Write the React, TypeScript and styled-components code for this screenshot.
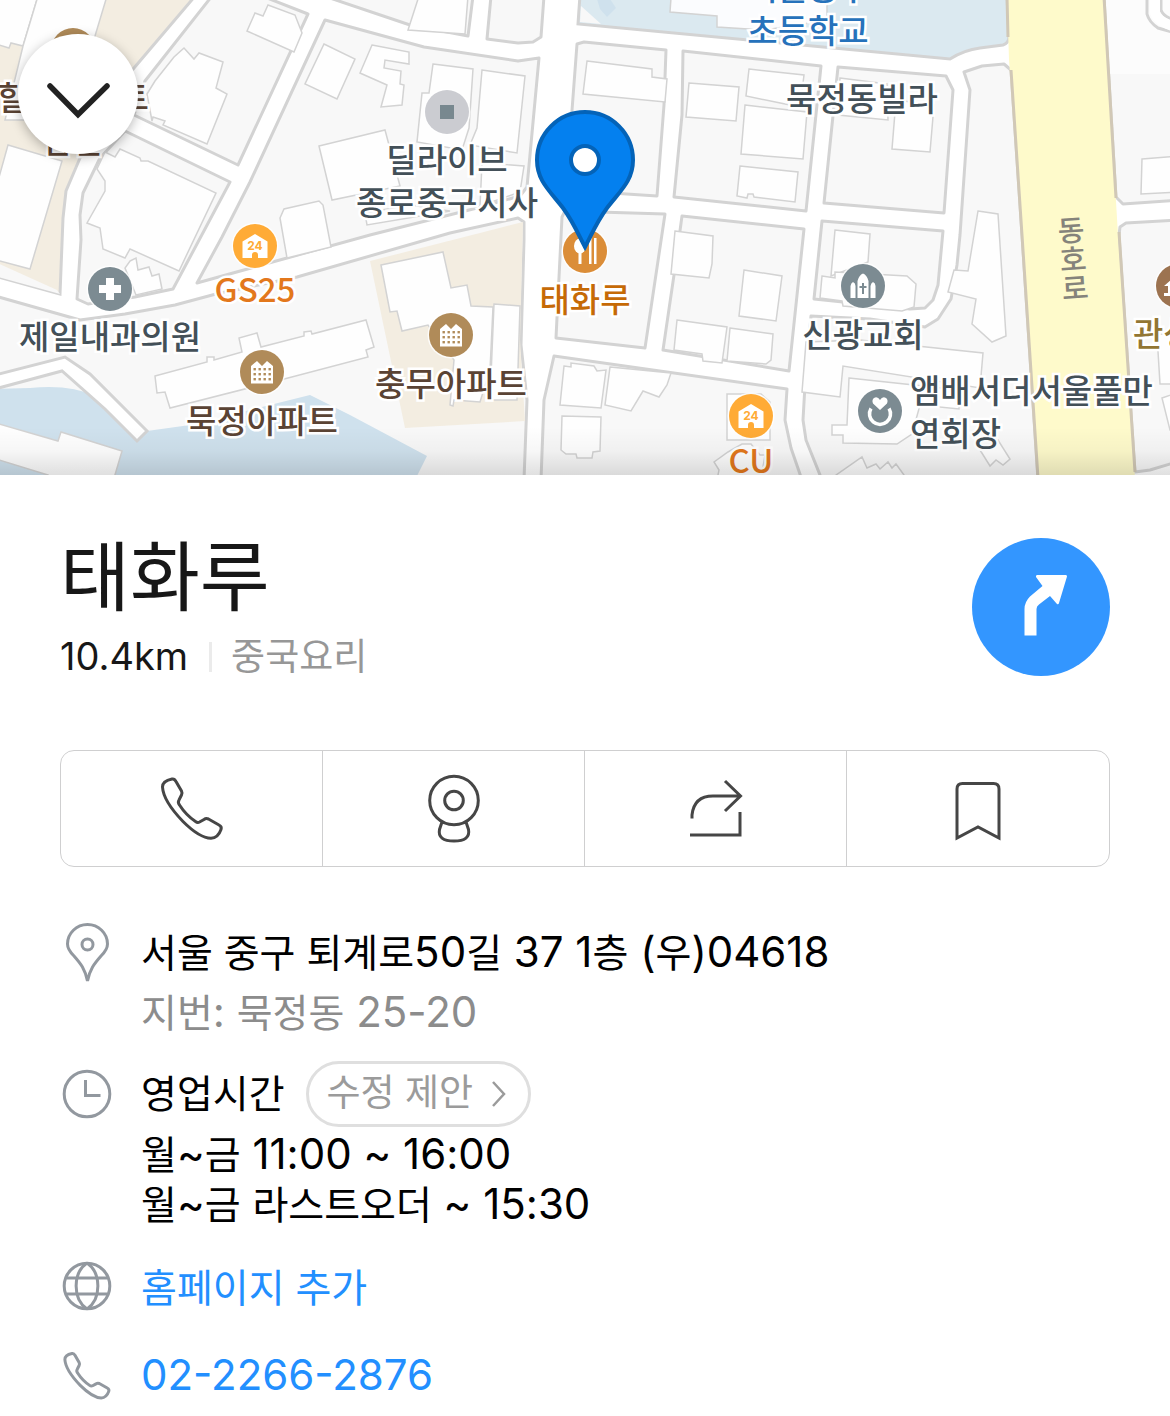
import React from "react";
import styled, { createGlobalStyle } from "styled-components";

const GlobalStyle = createGlobalStyle`
  *, *::before, *::after { box-sizing: border-box; }
  body {
    margin: 0;
    background: #fff;
    color: #000;
    font-family: Inter, "Noto Sans CJK KR", sans-serif;
  }
  button { font: inherit; color: inherit; cursor: pointer; }
`;

/* ---------- map ---------- */

const MapArea = styled.section`
  position: relative;
  height: 475px;
  overflow: hidden;
  background: #f8f8f8;
`;

const MapDrawing = styled.svg`
  position: absolute;
  top: 0;
  left: calc(50% - 585px);
  width: 1170px;
  height: 475px;
`;

const MapFade = styled.div`
  position: absolute;
  inset: auto 0 0 0;
  height: 48px;
  background: linear-gradient(rgba(0, 0, 0, 0), rgba(0, 0, 0, 0.03) 50%, rgba(0, 0, 0, 0.12));
`;

const Label = styled.span<{ $x: number; $y: number; $color: string; $start?: boolean }>`
  position: absolute;
  left: calc(50% + ${(p) => p.$x - 585}px);
  top: ${(p) => p.$y}px;
  transform: translateX(${(p) => (p.$start ? "0" : "-50%")});
  color: ${(p) => p.$color};
  font: 500 33px/43px "Noto Sans CJK KR", sans-serif;
  text-align: ${(p) => (p.$start ? "left" : "center")};
  white-space: pre;
  -webkit-text-stroke: 5px #fff;
  paint-order: stroke fill;
`;

const RoadName = styled.span`
  position: absolute;
  left: calc(50% + 474px);
  top: 214px;
  width: 28px;
  color: #85837b;
  font: 500 29px/29px "Noto Sans CJK KR", sans-serif;
  text-align: center;
  white-space: pre;
  transform: rotate(-4deg);
`;

const CloseButton = styled.button`
  position: absolute;
  top: 34px;
  left: 18px;
  width: 120px;
  height: 120px;
  padding: 0;
  border: 0;
  border-radius: 50%;
  background: #fff;
  box-shadow: 0 3px 12px rgba(0, 0, 0, 0.28);
`;

const SLATE = "#435058";
const BROWN = "#5a4334";

const labels: { text: string; x: number; y: number; color: string; start?: boolean }[] = [
  { text: "힐스테이트\n남산", x: 73, y: 75, color: BROWN },
  { text: "제일내과의원", x: 110, y: 314, color: SLATE },
  { text: "GS25", x: 255, y: 267, color: "#e3781c" },
  { text: "묵정아파트", x: 262, y: 398, color: BROWN },
  { text: "충무아파트", x: 451, y: 361, color: BROWN },
  { text: "딜라이브\n종로중구지사", x: 447, y: 137, color: SLATE },
  { text: "태화루", x: 585, y: 277, color: "#c66a06" },
  { text: "서울충무\n초등학교", x: 808, y: -35, color: "#2672bb" },
  { text: "묵정동빌라", x: 862, y: 76, color: SLATE },
  { text: "신광교회", x: 863, y: 312, color: SLATE },
  { text: "앰배서더서울풀만\n연회장", x: 910, y: 368, color: SLATE, start: true },
  { text: "CU", x: 751, y: 438, color: "#e3781c" },
  { text: "관성묘", x: 1133, y: 311, color: "#927633", start: true },
];

const blocks = [
  "212,-4 145,81 134,115 238,165 308,14 262,-4",
  "125,131 100,158 83,193 80,215 81,240 77,299 88,304 135,297 173,289 230,182",
  "325,20 424,47 518,61 539,58 527,187 520,196 477,208 370,235 287,258 197,283 222,237 250,182",
  "318,-6 410,25 468,36 473,-4",
  "491,-4 487,39 518,43 533,42 541,37 544,-4",
  "577,44 584,42 666,50 664,105 657,196 566,190",
  "683,51 821,66 806,211 674,197 682,115",
  "838,67 946,76 953,90 944,213 824,203",
  "964,72 982,66 1004,64 1011,70 1022,235 1038,480 822,480 806,440 803,420 805,385 811,316 870,319 925,327 938,319 951,299 957,265 960,235 970,90",
  "822,221 943,231 938,285 933,300 925,308 910,309 814,299",
  "682,216 804,229 789,371 663,350 674,275",
  "562,217 565,211 665,214 645,348 556,338",
  "554,356 787,389 785,420 791,448 802,480 541,480 544,400",
  "1104,-4 1116,197 1123,204 1180,200 1180,-4",
  "1119,235 1120,227 1126,223 1180,220 1180,461 1150,470 1135,472",
  "-5,296 80,320 125,314 175,305 216,294 297,277 450,233 518,218 524,222 524,240 521,345 527,400 524,480 -5,480",
];

const buildings = [
  "38,-4 23,46 11,43 9,48 -4,44 -4,-20",
  "107,-4 95,36 60,120 5,120 23,46 38,-4",
  "8,145 62,161 30,269 -4,260 -4,188",
  "147,94 155,81 174,57 184,48 194,59 199,53 223,62 216,88 227,94 207,144 163,125 165,121 153,117 152,121",
  "105,152 115,157 120,149 140,158 141,161 148,161 216,193 179,271 130,249 125,258 103,249 100,228 87,223 105,191 105,181 97,169",
  "130,261 136,258 138,270 149,267 152,276 159,274 162,289 136,295 125,268",
  "268,5 295,15 302,33 294,52 247,31 255,13 263,16",
  "324,44 355,59 337,99 305,84",
  "372,45 409,52 409,64 385,60 384,68 401,71 400,84 404,85 402,105 381,107 387,85 360,73",
  "419,-4 408,30 465,34 468,-4",
  "319,146 385,130 400,186 332,200",
  "433,64 473,69 469,128 462,150 417,142 422,93 429,93",
  "482,70 525,76 517,153 470,145 477,128",
  "482,163 524,166 520,192 480,206",
  "280,218 284,209 319,201 323,205 331,247 287,258",
  "365,213 410,205 450,211 367,225",
  "155,376 207,362 207,357 214,357 214,360 242,352 239,338 257,333 261,347 304,336 304,332 311,331 312,334 366,320 374,347 366,350 368,357 288,378 170,408 165,392 157,393",
  "381,265 443,252 451,288 467,285 471,306 493,307 490,370 480,402 454,400 453,406 450,405 454,360 428,325 402,331 397,311 390,312",
  "494,304 520,306 517,400 490,400",
  "587,61 652,69 652,77 667,79 665,102 583,94",
  "689,83 739,87 736,121 686,117",
  "749,69 804,75 800,107 746,96",
  "745,105 807,112 803,159 741,154",
  "740,166 798,172 795,202 754,197 753,194 748,194 747,198 737,196",
  "840,78 887,84 888,120 838,115",
  "896,100 934,105 930,152 892,149",
  "675,231 713,236 712,264 709,278 671,274",
  "744,270 782,276 776,321 739,316",
  "677,320 727,327 722,363 703,361 702,354 674,350",
  "730,328 773,334 771,360 766,364 727,361",
  "564,366 571,367 571,363 594,366 597,371 606,370 601,408 560,405",
  "610,367 671,373 667,385 659,397 643,391 631,411 605,405",
  "562,416 601,417 600,451 593,452 592,458 577,458 576,454 566,454 561,450",
  "835,230 870,234 868,262 831,276",
  "822,276 835,278 835,272 907,276 916,284 914,307 902,311 843,306 842,301 820,298",
  "978,211 998,214 1006,336 992,342 972,324 976,299 948,292 954,270 968,271",
  "806,342 860,340 983,353 980,388 843,366 840,397 802,392",
  "849,378 960,390 959,409 920,405 912,434 897,444 843,443 843,435 832,435 832,425 847,425",
  "836,475 862,457 867,468 876,464 880,469 888,462 892,468 896,464 904,475 904,485 836,485",
  "980,450 990,466 996,460 1003,465 1010,459 998,440",
  "727,394 761,394 770,402 770,440 727,440",
  "714,462 728,452 742,444 751,444 760,455 765,455 760,485 716,485 719,470",
  "1142,159 1180,156 1180,192 1141,194",
  "1157,335 1180,330 1180,384 1160,384",
  "1162,398 1180,392 1180,430 1170,430",
  "-4,423 58,441 61,432 122,451 112,485 45,485 48,475 -4,459",
];

function Disc({ x, y, fill, children }: { x: number; y: number; fill: string; children?: React.ReactNode }) {
  return (
    <g transform={`translate(${x} ${y})`}>
      <circle r="23.5" fill="#fff" opacity="0.8" />
      <circle r="22" fill={fill} />
      {children}
    </g>
  );
}

function Apartment() {
  return (
    <g>
      <path d="M-11 11.500V-6L-5 -11 0-6 5-11 11-6V11.500Z" fill="#fff" />
      {[-7.5, -2.500, 2.500, 7.500].map((x) =>
        [-3, 2, 7].map((y) => <rect key={`${x}${y}`} x={x - 1} y={y - 1} width="2.400" height="2.400" fill="#b08b59" />),
      )}
    </g>
  );
}

function Store() {
  return (
    <g>
      <path d="M-12.500 12V-4.500L0-12 12.500-4.500V12H3V9A3 3 0 0 0-3 9V12Z" fill="#fff" />
      <text y="4" textAnchor="middle" fontFamily="Inter, sans-serif" fontWeight="700" fontSize="12" fill="#ffab36">
        24
      </text>
    </g>
  );
}

function CityMap() {
  return (
    <MapDrawing viewBox="0 0 1170 475" aria-hidden="true">
      <rect width="1170" height="475" fill="#fff" />
      <path
        d="M-5-5H196L134 68 108 100 80 158 66 191 63 218 60 294-5 276Z"
        fill="#f3ede1"
        stroke="#d3d3d3"
        strokeWidth="3"
      />
      <path d="M-5 262 57 290 60 294-5 276Z" fill="#f8f8f8" />
      <g fill="#f8f8f8" stroke="#d3d3d3" strokeWidth="3" strokeLinejoin="round">
        {blocks.map((p) => (
          <polygon key={p} points={p} />
        ))}
      </g>
      <path d="M1106 0H1170V74H1110Z" fill="#fcfcfc" />
      <path d="M1147-3V14Q1149 22 1158 28L1172 32M1161-3V10Q1163 16 1172 19" fill="none" stroke="#d3d3d3" strokeWidth="3" />
      <path d="M1155-3V12Q1156 20 1172 26" fill="none" stroke="#fff" strokeWidth="10" />
      <path
        d="M580-5 578 24 950 59Q964 50 980 48L1003 45Q1009 43 1009 36L1007-5Z"
        fill="#dbe9f0"
        stroke="#d3d3d3"
        strokeWidth="3"
      />
      <path d="M581 6 601 24 580 22Z" fill="#f8f8f8" />
      <path d="M597-1H610L616 8 607 17 600 9Z" fill="#cfe1ed" />
      <path d="M671-2 670 12 717 16 717 27 765 30 827 20V-2Z" fill="#fbfcfe" stroke="#d3d3d3" strokeWidth="1.500" />
      <path d="M370 261 476 234 523 222 520 340 525 421 405 428Z" fill="#f3ede1" />
      <path
        d="M-5 389 30 388Q70 384 95 396L147 431 190 425 310 395 350 415 427 456 415 480H-5Z"
        fill="#cfe1ed"
      />
      <path
        d="M-5 375 65 357 90 374 147 431 137 441 105 409 62 371-5 389Z"
        fill="#fff"
        stroke="#d3d3d3"
        strokeWidth="3"
      />
      <g fill="#fefefe" stroke="#d3d3d3" strokeWidth="1.500">
        {buildings.map((p) => (
          <polygon key={p} points={p} />
        ))}
      </g>
      <path d="M1007-3 1009 60 1022 235 1038 478H1135L1118 235 1104-3Z" fill="#fefacb" />
      <path
        d="M1007-3 1008 37M1011 70 1022 235 1038 478M1104-3 1116 198M1119 232 1135 472"
        fill="none"
        stroke="#d1c8b6"
        strokeWidth="3"
      />

      <Disc x={73} y={50} fill="#b08b59" />
      <Disc x={110} y={289} fill="#7c8b92">
        <path d="M-4-11H4V-4H11V4H4V11H-4V4H-11V-4H-4Z" fill="#fff" />
      </Disc>
      <Disc x={255} y={246} fill="#ffab36">
        <Store />
      </Disc>
      <Disc x={262} y={372} fill="#b08b59">
        <Apartment />
      </Disc>
      <Disc x={451} y={335} fill="#b08b59">
        <Apartment />
      </Disc>
      <Disc x={447} y={112} fill="#cbccd1">
        <rect x="-7" y="-7" width="14" height="14" fill="#78888f" />
      </Disc>
      <Disc x={585} y={251} fill="#db8d38">
        <ellipse cx="-5" cy="-5" rx="6" ry="7.500" fill="#fff" />
        <path d="M-6.500 0H-3.500V13H-6.500ZM4-13H6.500V13H4ZM9-13H11.500V13H9Z" fill="#fff" />
      </Disc>
      <Disc x={863} y={286} fill="#7c8b92">
        <path
          d="M-5.500 12V-5Q-4-11 0-12.500 4-11 5.500-5V12ZM-12.500 12V0Q-12-3-10-4-7.500-3-7.500 0V12ZM7.500 12V0Q8-3 10-4 12.500-3 12.500 0V12Z"
          fill="#fff"
        />
        <path d="M0-3V8M-3.500 1H3.500" stroke="#7c8b92" strokeWidth="2" />
      </Disc>
      <Disc x={880} y={411} fill="#7c8b92">
        <path d="M-9-5.500A10.500 10.500 0 1 0 9-5.500" transform="translate(0 3)" fill="none" stroke="#fff" strokeWidth="3.500" />
        <path d="M0-1-7-7.500Q-8.500-11-6-13-2.500-15 0-11 2.500-15 6-13 8.500-11 7-7.500Z" fill="#fff" />
      </Disc>
      <Disc x={751} y={416} fill="#ffab36">
        <Store />
      </Disc>
      <Disc x={1178} y={286} fill="#9c7350">
        <path d="M-14 10H14V7H10V0H14L0-12-14 0H-10V7H-14Z" fill="#fff" />
      </Disc>
      <path
        d="M585 247C579 236 574 223 563 208 550 191 537 181 537 160A48 48 0 0 1 633 160C633 181 620 191 607 208 596 223 591 236 585 247Z"
        fill="#0480ef"
        stroke="#0463b8"
        strokeWidth="4"
      />
      <circle cx="585" cy="160" r="14" fill="#fff" stroke="#0463b8" strokeWidth="4" />
    </MapDrawing>
  );
}

/* ---------- icons ---------- */

const ActionSvg = styled.svg`
  display: block;
  width: 72px;
  height: 72px;
  fill: none;
  stroke: #464646;
  stroke-width: 3;
`;

const RowSvg = styled.svg<{ $stroke?: number }>`
  display: block;
  width: 54px;
  height: 60px;
  fill: none;
  stroke: #92989f;
  stroke-width: ${(p) => p.$stroke ?? 3};
`;

const PHONE_PATH =
  "M6.500 15C6.500 10 11 8 16 7Q18.500 6.500 20 9.500L25.500 19Q26.500 21 25.500 23L23 28Q21.500 30.500 23.500 33C28 40 33.500 45.500 39.500 49.500Q41.500 51 43.500 50L48 47.500Q50 46 52.500 47L63 53Q66 54.500 65 57.500 62 66 55 66.300C46 66 36 58.500 27 49.500 15 37 7 24 6.500 15Z";

/* ---------- place sheet ---------- */

const Sheet = styled.main`
  background: #fff;
  padding: 52px 60px 10px;
`;

const Header = styled.header`
  display: flex;
  justify-content: space-between;
  align-items: flex-start;
  padding-bottom: 64px;
`;

const Title = styled.h1`
  margin: 0;
  color: #171717;
  font-size: 76px;
  font-weight: 400;
  line-height: 100px;
`;

const Meta = styled.p`
  display: flex;
  align-items: center;
  margin: 0;
  line-height: 59px;
`;

const Distance = styled.span`
  color: #171717;
  font-size: 38px;
`;

const Category = styled.span`
  margin-left: 21px;
  padding-left: 22px;
  color: #979797;
  font-size: 37px;
  background: linear-gradient(#ebebeb, #ebebeb) 0 50% / 3px 30px no-repeat;
`;

const RouteButton = styled.button`
  width: 138px;
  height: 138px;
  margin-top: 11px;
  padding: 0;
  border: 0;
  border-radius: 50%;
  background: #3396ff;
`;

const Actions = styled.nav`
  display: grid;
  grid-template-columns: repeat(4, 1fr);
  height: 117px;
  border: 1px solid #cfcfd0;
  border-radius: 14px;
`;

const ActionButton = styled.button`
  display: flex;
  align-items: center;
  justify-content: center;
  padding: 0 0 2px;
  border: 0;
  background: none;

  &:not(:last-child) {
    border-right: 1px solid #cfcfd0;
  }
`;

const InfoList = styled.div`
  display: flex;
  flex-direction: column;
  gap: 28px;
  padding-top: 56px;
`;

const InfoRow = styled.div<{ $tight?: boolean }>`
  display: grid;
  grid-template-columns: 54px 1fr;
  column-gap: 27px;
  align-items: start;
  font-size: 39px;
  margin-bottom: ${(p) => (p.$tight ? "-10px" : "0")};
`;

const Line = styled.p<{ $muted?: boolean; $height?: number }>`
  margin: 0;
  color: ${(p) => (p.$muted ? "#8c8c8c" : "#000")};
  line-height: ${(p) => p.$height ?? 60}px;
`;

/* Latin digits are set larger so that they stand as tall as the Hangul. */
const Num = styled.span`
  font-size: 42px;
  line-height: 1;
`;

const HoursHead = styled.div`
  display: flex;
  align-items: center;
  gap: 21px;
  margin-bottom: 3px;
`;

const SuggestButton = styled.button`
  display: flex;
  align-items: center;
  gap: 18px;
  height: 66px;
  padding: 0 22px 0 18px;
  border: 3px solid #dfdfdf;
  border-radius: 33px;
  background: #fff;
  color: #9b9b9b;
  font-size: 37px;
  line-height: 58px;
`;

const SuggestText = styled.span`
  padding-bottom: 2px;
`;

const InfoLink = styled.a`
  color: #228fff;
  line-height: 60px;
  text-decoration: none;
`;

export default function App() {
  return (
    <>
      <GlobalStyle />
      <MapArea aria-label="지도">
        <CityMap />
        {labels.map((l) => (
          <Label key={l.text} $x={l.x} $y={l.y} $color={l.color} $start={l.start}>
            {l.text}
          </Label>
        ))}
        <RoadName>{"동\n호\n로"}</RoadName>
        <MapFade />
        <CloseButton aria-label="닫기">
          <svg width="120" height="120" viewBox="0 0 120 120" fill="none" aria-hidden="true">
            <path d="M32 52 60 80.500 89 52" stroke="#222" strokeWidth="5.500" strokeLinecap="round" />
          </svg>
        </CloseButton>
      </MapArea>

      <Sheet>
        <Header>
          <div>
            <Title>태화루</Title>
            <Meta>
              <Distance>10.4km</Distance>
              <Category>중국요리</Category>
            </Meta>
          </div>
          <RouteButton aria-label="길찾기">
            <svg width="138" height="138" viewBox="0 0 138 138" aria-hidden="true">
              <path
                d="M52.500 97.500H64.500V71Q64.500 68 67 66.500L78 58 85 66Q86.500 67 87 65L95 38.500Q95 37 94 37H65Q63.500 37.500 64 39L70.500 48 58 58.500Q52.500 64 52.500 71Z"
                fill="#fff"
              />
            </svg>
          </RouteButton>
        </Header>

        <Actions aria-label="장소 메뉴">
          <ActionButton aria-label="전화">
            <ActionSvg viewBox="0 0 72 72">
              <path d={PHONE_PATH} />
            </ActionSvg>
          </ActionButton>
          <ActionButton aria-label="거리뷰">
            <ActionSvg viewBox="0 0 72 72">
              <circle cx="36" cy="28.500" r="24.300" />
              <circle cx="36" cy="28.500" r="9.300" />
              <path d="M24 50 21.500 57.500C20 65 25 69 36 69S52 65 50.500 57.500L48 50" />
            </ActionSvg>
          </ActionButton>
          <ActionButton aria-label="공유">
            <ActionSvg viewBox="0 0 72 72">
              <path d="M12 46.500V43Q14 24 33 24H60M45 9 60.500 24 45 39M10 63H60V40" />
            </ActionSvg>
          </ActionButton>
          <ActionButton aria-label="저장">
            <ActionSvg viewBox="0 0 72 72">
              <path d="M15 66V17Q15 11.500 20.500 11.500H51.500Q57 11.500 57 17V66L36 55Z" />
            </ActionSvg>
          </ActionButton>
        </Actions>

        <InfoList>
          <InfoRow $tight>
            <RowSvg viewBox="0 0 54 60" aria-hidden="true">
              <path d="M27.500 58C25 46 21 41 14 33 9 28 7.500 25 7.500 21A20 19.500 0 0 1 47.500 21C47.500 25 46 28 41 33 34 41 30 46 27.500 58Z" />
              <circle cx="27.500" cy="21.500" r="5.500" />
            </RowSvg>
            <div>
              <Line>
                서울 중구 퇴계로<Num>50</Num>길<Num> 37 1</Num>층<Num> (</Num>우<Num>)04618</Num>
              </Line>
              <Line $muted>
                지번<Num>: </Num>묵정동<Num> 25-20</Num>
              </Line>
            </div>
          </InfoRow>

          <InfoRow>
            <RowSvg viewBox="0 -3 54 60" aria-hidden="true">
              <circle cx="27" cy="30" r="22.800" />
              <path d="M25.500 16V31.500H40.500" />
            </RowSvg>
            <div>
              <HoursHead>
                <Line>영업시간</Line>
                <SuggestButton>
                  <SuggestText>수정 제안</SuggestText>
                  <svg width="15" height="28" viewBox="0 0 15 28" fill="none" aria-hidden="true">
                    <path d="M2 2 13 14 2 26" stroke="#9b9b9b" strokeWidth="2.500" />
                  </svg>
                </SuggestButton>
              </HoursHead>
              <Line $height={50}>
                월<Num>~</Num>금<Num> 11:00 ~ 16:00</Num>
              </Line>
              <Line $height={50}>
                월<Num>~</Num>금<Num> </Num>라스트오더<Num> ~ 15:30</Num>
              </Line>
            </div>
          </InfoRow>

          <InfoRow>
            <RowSvg viewBox="0 1 54 60" aria-hidden="true">
              <circle cx="27" cy="29" r="22.800" />
              <path d="M27 6C12.500 16 12.500 42 27 52M27 6C41.500 16 41.500 42 27 52M6.500 21H47.500M6.500 37H47.500" />
            </RowSvg>
            <InfoLink href="#homepage">홈페이지 추가</InfoLink>
          </InfoRow>

          <InfoRow>
            <RowSvg viewBox="0 -3 72 80" $stroke={4} aria-hidden="true">
              <path d={PHONE_PATH} />
            </RowSvg>
            <InfoLink href="tel:02-2266-2876">
              <Num>02-2266-2876</Num>
            </InfoLink>
          </InfoRow>
        </InfoList>
      </Sheet>
    </>
  );
}
